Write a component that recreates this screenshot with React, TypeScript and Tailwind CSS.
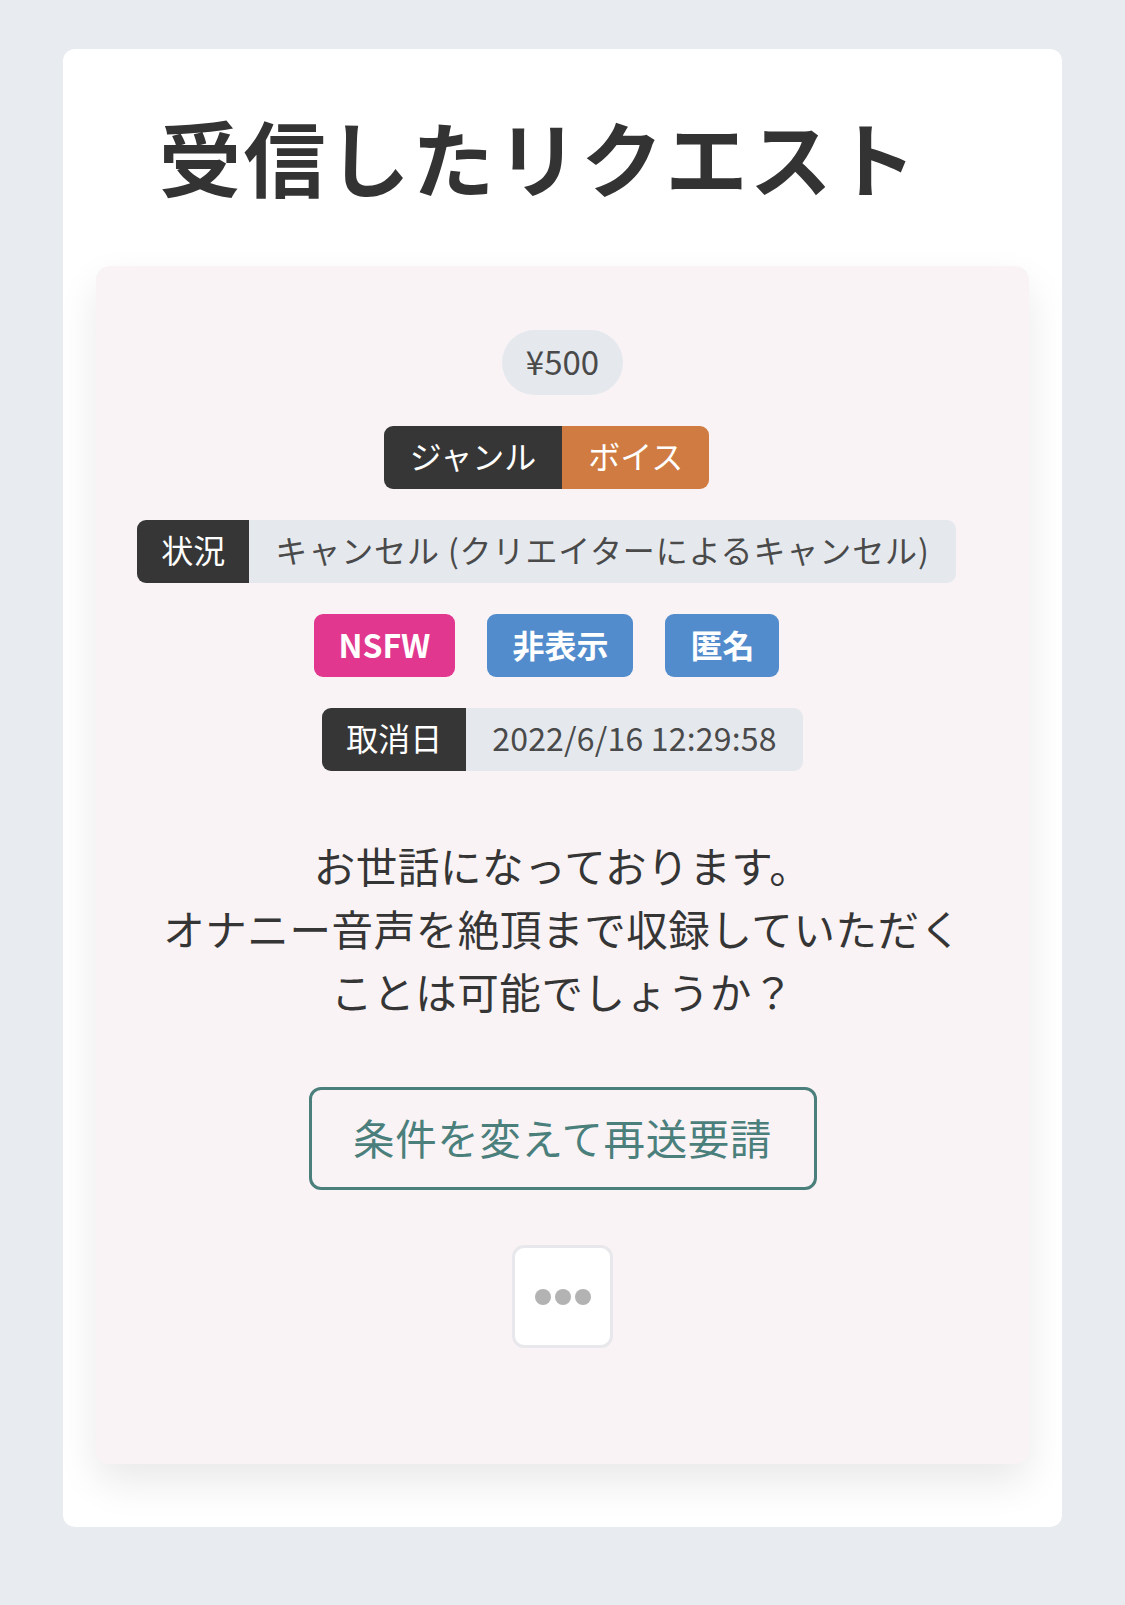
const font = { fontFamily: '"Noto Sans CJK JP", "Noto Sans", sans-serif' };

function Pair({ label, value, valueClass }: { label: string; value: string; valueClass: string }) {
  return (
    <div className="flex h-[63px] shrink-0 overflow-hidden whitespace-nowrap rounded-[9px] text-[32px] leading-none">
      <div className="flex shrink-0 items-center bg-[#363636] px-[24px] pb-[5px] text-white">{label}</div>
      <div className={`flex shrink-0 items-center px-[26px] pb-[5px] ${valueClass}`}>{value}</div>
    </div>
  );
}

function Tag({ label, color }: { label: string; color: string }) {
  return (
    <div className={`flex h-[63px] items-center rounded-[9px] px-[25px] pb-[3px] text-[32px] font-bold leading-none text-white ${color}`}>
      {label}
    </div>
  );
}

export default function App() {
  return (
    <div className="min-h-[1605px] bg-[#e8ebef] pt-[49px]" style={font}>
      <div className="mx-[63px] rounded-[12px] bg-white px-[33px] pt-[58px] pb-[63px]">
        <h1 className="mb-[61px] pl-[63px] text-[82px] font-bold leading-[98px] tracking-[2.4px] text-[#333333]">受信したリクエスト</h1>

        <div className="flex flex-col items-center rounded-[14px] bg-[#f9f3f5] px-[64px] pt-[64px] pb-[116px] shadow-[0_18px_40px_rgba(0,0,0,0.09)]">
          <div className="flex w-full flex-col items-center gap-[31px]">
            <div className="flex h-[65px] items-center rounded-full bg-[#e5e9ee] px-[24px] pb-[2px] text-[33px] leading-none text-[#4a4a4a]">¥500</div>

            <div className="mr-[32px] flex h-[63px] overflow-hidden rounded-[9px] text-[32px] leading-none">
              <div className="flex items-center bg-[#363636] px-[26px] pb-[5px] text-white">ジャンル</div>
              <div className="flex items-center bg-[#cf7b41] px-[26px] pb-[5px] text-white">ボイス</div>
            </div>

            <div className="mr-[32px] flex shrink-0 justify-center whitespace-nowrap">
              <Pair label="状況" value="キャンセル (クリエイターによるキャンセル)" valueClass="bg-[#e5e9ee] text-[#4a4a4a] tracking-[0.9px]" />
            </div>

            <div className="mr-[32px] flex gap-[32px]">
              <Tag label="NSFW" color="bg-[#e1378f]" />
              <Tag label="非表示" color="bg-[#528ccd]" />
              <Tag label="匿名" color="bg-[#528ccd]" />
            </div>

            <Pair label="取消日" value="2022/6/16 12:29:58" valueClass="bg-[#e5e9ee] text-[#4a4a4a] tracking-[0.2px]" />
          </div>

          <p className="mt-[63px] mb-[2px] text-center text-[41.5px] leading-[63px] tracking-[0.6px] text-[#353535]">
            お世話になっております。
            <br />
            オナニー音声を絶頂まで収録していただく
            <br />
            ことは可能でしょうか？
          </p>

          <button className="mt-[62px] flex h-[103px] w-[508px] items-center justify-center rounded-[12px] border-[3px] border-[#4b7f7c] pb-[2px] text-[41.5px] leading-none tracking-[0.6px] text-[#4b7f7c]">
            条件を変えて再送要請
          </button>

          <button className="mt-[55px] flex h-[103px] w-[101px] items-center justify-center rounded-[12px] border-[3px] border-[#e8e8ec] bg-white">
            <svg width="56" height="16" viewBox="0 0 56 16">
              <circle cx="8" cy="8" r="8" fill="#b3b3b3" />
              <circle cx="28" cy="8" r="8" fill="#b3b3b3" />
              <circle cx="48" cy="8" r="8" fill="#b3b3b3" />
            </svg>
          </button>
        </div>
      </div>
    </div>
  );
}
